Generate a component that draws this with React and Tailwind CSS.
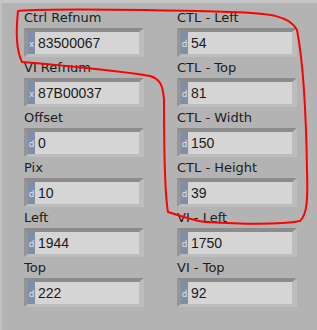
// App.jsx
const left = [
	{ label: "Ctrl Refnum", value: "83500067", kind: "x" },
	{ label: "VI Refnum", value: "87B00037", kind: "x" },
	{ label: "Offset", value: "0", kind: "d" },
	{ label: "Pix", value: "10", kind: "d" },
	{ label: "Left", value: "1944", kind: "d" },
	{ label: "Top", value: "222", kind: "d" },
];

const right = [
	{ label: "CTL - Left", value: "54", kind: "d" },
	{ label: "CTL - Top", value: "81", kind: "d" },
	{ label: "CTL - Width", value: "150", kind: "d" },
	{ label: "CTL - Height", value: "39", kind: "d" },
	{ label: "VI - Left", value: "1750", kind: "d" },
	{ label: "VI - Top", value: "92", kind: "d" },
];

function Indicator({ label, value, kind }) {
	return (
		<div className="flex flex-col">
			<div className="h-[21px] pt-[2px] text-[13px] leading-[18px] text-[#1c1c1c] font-['DejaVu_Sans',sans-serif]">
				{label}
			</div>
			<div className="w-[120px] h-[29px] border-t-[4px] border-l-[4px] border-r-[5px] border-b-[3px] border-t-[#8c8c8c] border-l-[#959595] border-r-[#bdbdbd] border-b-[#bdbdbd] bg-[#d5d5d5] flex items-stretch">
				<div className="w-[7px] bg-[#7f8ea9] text-[#e8ecf4] text-[9px] leading-none flex items-center justify-center">
					{kind}
				</div>
				<div className="pl-[3px] text-[14px] leading-[22px] text-[#1a1a1a] font-['Liberation_Sans',sans-serif]">
					{value}
				</div>
			</div>
		</div>
	);
}

export default function App() {
	return (
		<div className="relative w-[317px] h-[330px] bg-[#b3b3b3] border-t-[3px] border-l-[2px] border-t-[#c6c6c6] border-l-[#c2c2c2] overflow-hidden font-['Open_Sans',sans-serif]">
			<div className="flex gap-[33px] pl-[22px] pt-[4px]">
				<div className="flex flex-col">
					{left.map((r) => (
						<Indicator key={r.label} {...r} />
					))}
				</div>
				<div className="flex flex-col">
					{right.map((r) => (
						<Indicator key={r.label} {...r} />
					))}
				</div>
			</div>

			{/* red annotation scribble */}
			<svg
				className="absolute left-[-2px] top-[-3px] pointer-events-none"
				width="317"
				height="330"
				viewBox="0 0 317 330"
			>
				<path
					d="M 18 11 C 60 8, 150 10, 230 12 C 270 13, 290 16, 297 30 C 303 60, 306 110, 307 170 C 308 200, 307 215, 300 221 C 280 225, 240 224, 205 222 C 190 220, 178 215, 168 212 C 164 190, 164 140, 164 100 C 163 85, 160 79, 150 76 C 120 71, 70 66, 22 62 C 16 50, 16 30, 18 11 Z"
					fill="none"
					stroke="#ff0000"
					strokeWidth="2"
					strokeLinejoin="round"
				/>
			</svg>
		</div>
	);
}
